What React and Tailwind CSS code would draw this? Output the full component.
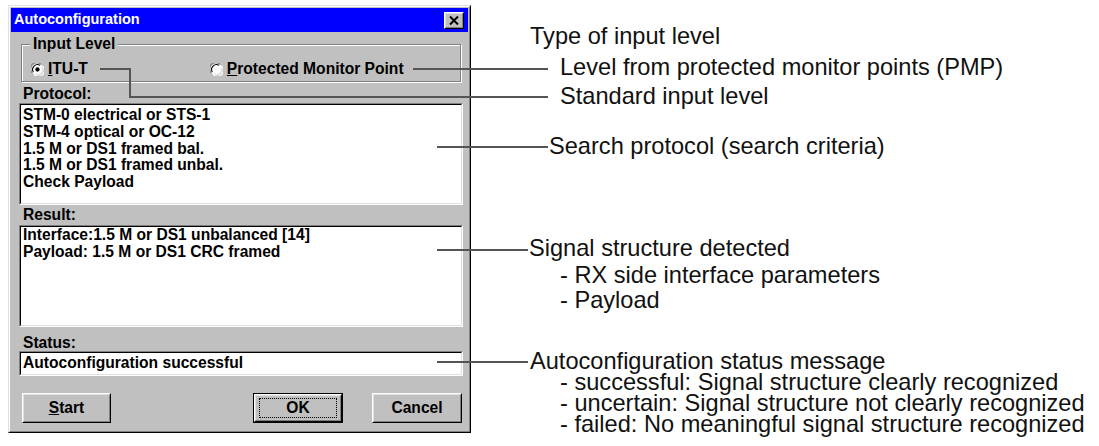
import React from "react";

const sunkenOuter = "border border-t-[#808080] border-l-[#808080] border-b-white border-r-white";
const sunkenInner = "border border-t-black border-l-black border-b-[#dfdfdf] border-r-[#dfdfdf] bg-white";

function Radio({ checked }) {
  return (
    <svg width="13" height="13" viewBox="0 0 12 12" className="shrink-0">
      <circle cx="6" cy="6" r="5.5" fill="#fff" />
      <path d="M1.2 9.2 A5.5 5.5 0 0 1 9.2 1.2" fill="none" stroke="#808080" strokeWidth="1" />
      <path d="M2.2 8.4 A4.5 4.5 0 0 1 8.4 2.2" fill="none" stroke="#000" strokeWidth="1" />
      <path d="M10.8 2.8 A5.5 5.5 0 0 1 2.8 10.8" fill="none" stroke="#fff" strokeWidth="1" />
      <path d="M9.8 3.6 A4.5 4.5 0 0 1 3.6 9.8" fill="none" stroke="#dfdfdf" strokeWidth="1" />
      {checked && <circle cx="6" cy="6" r="2" fill="#000" />}
    </svg>
  );
}

function Btn({ children, def, className = "" }) {
  const face = (
    <div className="h-full border border-t-white border-l-white border-b-black border-r-black">
      <div className="flex h-full items-center justify-center border border-t-[#dfdfdf] border-l-[#dfdfdf] border-b-[#808080] border-r-[#808080]">
        {def ? (
          <div className="flex h-[20px] w-[78px] items-center justify-center border border-dotted border-black">
            {children}
          </div>
        ) : (
          children
        )}
      </div>
    </div>
  );
  return (
    <div className={`h-[30px] ${className}`}>
      {def ? <div className="h-full border border-black">{face}</div> : face}
    </div>
  );
}

function Box({ className, children }) {
  return (
    <div className={`ml-[8px] w-[444px] ${sunkenOuter} ${className}`}>
      <div className={`h-full ${sunkenInner} pl-[2px] leading-[16.8px]`}>{children}</div>
    </div>
  );
}

function Note({ left, top, lh = "leading-[21px]", children }) {
  return (
    <div className={`absolute whitespace-nowrap ${lh}`} style={{ left, top }}>
      {children}
    </div>
  );
}

export default function App() {
  return (
    <div className="relative h-[446px] w-[1099px] overflow-hidden bg-white font-['Liberation_Sans',Arial,sans-serif] text-black">
      <div className="pl-[8px] pt-[5px]">
        <div className="h-[428px] w-[463px] border border-t-[#dfdfdf] border-l-[#dfdfdf] border-b-black border-r-black">
          <div className="h-full border border-t-white border-l-white border-b-[#808080] border-r-[#808080] bg-[#c0c0c0] p-px text-[15.6px] font-bold">
            <div className="flex h-[24px] items-center justify-between bg-[#0000ff] pl-[3px] pr-[4px] text-[14.5px] text-white">
              <span>Autoconfiguration</span>
              <div className="h-[17px] w-[20px] border border-t-white border-l-white border-b-black border-r-black">
                <div className="flex h-full items-center justify-center border border-t-[#dfdfdf] border-l-[#dfdfdf] border-b-[#808080] border-r-[#808080] bg-[#c0c0c0]">
                  <svg width="10" height="9" viewBox="0 0 10 9">
                    <path d="M1 0.5 L9 8.5 M9 0.5 L1 8.5" stroke="#000" strokeWidth="2" />
                  </svg>
                </div>
              </div>
            </div>

            <div className="relative ml-[10px] mt-[12px] h-[38px] w-[440px] border border-[#808080] shadow-[inset_1px_1px_0_#fff,1px_1px_0_#fff]">
              <span className="absolute left-[8px] top-[-10px] bg-[#c0c0c0] px-[3px] leading-[17px]">Input Level</span>
              <div className="mt-[16px] flex h-[16px] items-center pl-[9px]">
                <Radio checked />
                <span className="ml-[4px]"><span className="underline">I</span>TU-T</span>
                <div className="ml-[122px] flex items-center">
                  <Radio />
                  <span className="ml-[4px]"><span className="underline">P</span>rotected Monitor Point</span>
                </div>
              </div>
            </div>

            <div className="ml-[12px] mt-[3px] h-[17px] leading-[17px]">Protocol:</div>
            <Box className="mt-[1px] h-[102px]">
              <div className="pt-[2px]">
                <div>STM-0 electrical or STS-1</div>
                <div>STM-4 optical or OC-12</div>
                <div>1.5 M or DS1 framed bal.</div>
                <div>1.5 M or DS1 framed unbal.</div>
                <div>Check Payload</div>
              </div>
            </Box>

            <div className="ml-[12px] mt-[1px] h-[17px] leading-[17px]">Result:</div>
            <Box className="mt-[2px] h-[102px]">
              <div>Interface:1.5 M or DS1 unbalanced [14]</div>
              <div>Payload: 1.5 M or DS1 CRC framed</div>
            </Box>

            <div className="ml-[12px] mt-[7px] h-[17px] leading-[17px]">Status:</div>
            <Box className="mt-0 h-[25px]">
              <div className="leading-[20px]">Autoconfiguration successful</div>
            </Box>

            <div className="mt-[17px] flex">
              <Btn className="ml-[11px] w-[89px]">
                <span><span className="underline">S</span>tart</span>
              </Btn>
              <Btn def className="ml-[142px] w-[90px]">OK</Btn>
              <Btn className="ml-[29px] w-[90px]">Cancel</Btn>
            </div>
          </div>
        </div>
      </div>

      <svg className="pointer-events-none absolute left-0 top-0" width="1099" height="446">
        <g stroke="#555" strokeWidth="2" fill="none">
          <path d="M413 69 H548" />
          <path d="M100 69 H130 V97 H548" />
          <path d="M437 147 H548" />
          <path d="M437 250 H528" />
          <path d="M437 362 H528" />
        </g>
      </svg>

      <div className="text-[23.6px] text-[#111]">
        <Note left={530} top={26}>Type of input level</Note>
        <Note left={560} top={57}>Level from protected monitor points (PMP)</Note>
        <Note left={560} top={86}>Standard input level</Note>
        <Note left={549} top={136}>Search protocol (search criteria)</Note>
        <Note left={529} top={238}>Signal structure detected</Note>
        <Note left={560} top={263} lh="leading-[25px]">
          - RX side interface parameters
          <br />
          - Payload
        </Note>
        <Note left={530} top={351}>Autoconfiguration status message</Note>
        <Note left={560} top={372}>
          - successful: Signal structure clearly recognized
          <br />
          - uncertain: Signal structure not clearly recognized
          <br />
          - failed: No meaningful signal structure recognized
        </Note>
      </div>
    </div>
  );
}
